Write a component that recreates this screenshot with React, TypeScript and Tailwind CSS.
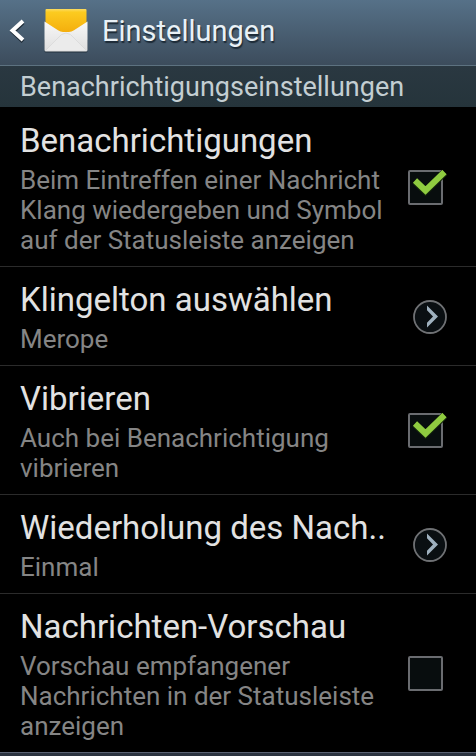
import { useState } from 'react';

type Setting = {
    id: string;
    title: string;
    summary: string;
    kind: 'check' | 'link';
    checked?: boolean;
};

const settings: Setting[] = [
    {
        id: 'notifications',
        title: 'Benachrichtigungen',
        summary: 'Beim Eintreffen einer Nachricht Klang wiedergeben und Symbol auf der Statusleiste anzeigen',
        kind: 'check',
        checked: true,
    },
    { id: 'ringtone', title: 'Klingelton auswählen', summary: 'Merope', kind: 'link' },
    { id: 'vibrate', title: 'Vibrieren', summary: 'Auch bei Benachrichtigung vibrieren', kind: 'check', checked: true },
    { id: 'repeat', title: 'Wiederholung des Nach..', summary: 'Einmal', kind: 'link' },
    {
        id: 'preview',
        title: 'Nachrichten-Vorschau',
        summary: 'Vorschau empfangener Nachrichten in der Statusleiste anzeigen',
        kind: 'check',
        checked: false,
    },
];

function EnvelopeIcon() {
    return (
        <svg viewBox="0 0 44 44" className="size-11 shrink-0" aria-hidden="true">
            <defs>
                <linearGradient id="flap" x1="0" y1="0" x2="0" y2="1">
                    <stop offset="0" stopColor="#fbdc62" />
                    <stop offset="0.12" stopColor="#fccb20" />
                    <stop offset="1" stopColor="#f3aa0a" />
                </linearGradient>
                <linearGradient id="paper" x1="0" y1="0" x2="0" y2="1">
                    <stop offset="0" stopColor="#f8f8f8" />
                    <stop offset="1" stopColor="#dedede" />
                </linearGradient>
            </defs>
            <rect x="0.500" y="30" width="43" height="13.500" rx="1.500" fill="#22303c" />
            <path d="M2.500 0h39q1 0 1 1v25h-41V1q0-1 1-1z" fill="url(#flap)" />
            <path d="M0.500 12.500L14 21.200q2.500 1.800 5 1.800h6q2.500 0 5-1.800l13.500-8.700V41q0 1.500-1.500 1.500H2Q0.500 42.500 0.500 41z" fill="url(#paper)" />
            <path d="M1.500 41.500l16-16q4.500-3 9 0l16 16" fill="#ebebeb" stroke="#d8d8d8" strokeWidth="0.800" />
        </svg>
    );
}

function SettingText({ title, summary }: { title: string; summary: string }) {
    return (
        <span className="min-w-0 flex-1">
            <span className="block truncate text-[33px] leading-[42px] text-[#e2e2e2]">{title}</span>
            <span className="mt-[3px] block text-[26px] leading-[30px] text-[#858585]">{summary}</span>
        </span>
    );
}

function CheckRow({ item }: { item: Setting }) {
    const [checked, setChecked] = useState(Boolean(item.checked));

    return (
        <label htmlFor={item.id} className="flex w-full items-center gap-4 pt-3 pr-[29px] pb-[11px] pl-5">
            <SettingText title={item.title} summary={item.summary} />
            <span className="relative flex w-[39px] shrink-0">
                <input
                    id={item.id}
                    type="checkbox"
                    checked={checked}
                    onChange={(e) => setChecked(e.target.checked)}
                    className="size-[35px] appearance-none rounded-xs border-2 border-[#6a6c70] bg-[#080d0e]"
                />
                {checked && (
                    <svg viewBox="0 0 39 35" className="pointer-events-none absolute inset-0 h-[35px] w-[39px]" aria-hidden="true">
                        <path d="M7 11l10.500 10L36.500 2.500" fill="none" stroke="#14260c" strokeWidth="7.500" />
                        <path d="M7 10.500l10.500 10L36.500 2" fill="none" stroke="#8fcb40" strokeWidth="6" />
                    </svg>
                )}
            </span>
        </label>
    );
}

function LinkRow({ item }: { item: Setting }) {
    return (
        <button type="button" className="flex w-full items-center gap-4 pt-3 pr-[29px] pb-[11px] pl-5 text-left">
            <SettingText title={item.title} summary={item.summary} />
            <span className="flex w-[39px] shrink-0 justify-end">
                <svg viewBox="0 0 34 34" className="size-[34px]" aria-hidden="true">
                    <circle cx="17" cy="17" r="16" fill="#0a0f12" stroke="#6f7174" strokeWidth="1.800" />
                    <path d="M14 5.500L25 16.500 14 27.500v-4.800l6-6.200-6-6.200z" fill="#9fb1bf" />
                </svg>
            </span>
        </button>
    );
}

export default function App() {
    return (
        <main className="min-h-screen bg-black font-['Roboto',sans-serif]">
            <header className="flex h-[66px] items-center border-b border-[#5d7280] bg-linear-to-b from-[#567188] to-[#3c4c5c] pb-1 pl-[9px]">
                <button type="button" aria-label="Zurück" className="mr-[19px]">
                    <svg viewBox="0 0 16 24" className="h-6 w-4" aria-hidden="true">
                        <path d="M14 3.500L4 13l10 9.500" fill="none" stroke="#1e2b36" strokeWidth="4" />
                        <path d="M14 2L3.500 11.500 14 21" fill="none" stroke="#fff" strokeWidth="4" />
                    </svg>
                </button>
                <EnvelopeIcon />
                <h1 className="ml-3.5 pt-0.5 text-[29px] text-[#e9f1f6] [text-shadow:1px_2px_1px_#1c2a36]">Einstellungen</h1>
            </header>

            <h2 className="border-b border-black bg-linear-to-b from-[#2a3841] to-[#25343b] px-5 pt-0.5 text-[27px] leading-[39px] text-[#c3ced2]">
                Benachrichtigungseinstellungen
            </h2>

            <ul className="divide-y divide-[#2b2b2b] border-b border-[#5b6374]">
                {settings.map((item) => (
                    <li key={item.id}>
                        {item.kind === 'check' ? <CheckRow item={item} /> : <LinkRow item={item} />}
                    </li>
                ))}
            </ul>
            <div className="h-[3px] bg-[#2c3440]"></div>
        </main>
    );
}
